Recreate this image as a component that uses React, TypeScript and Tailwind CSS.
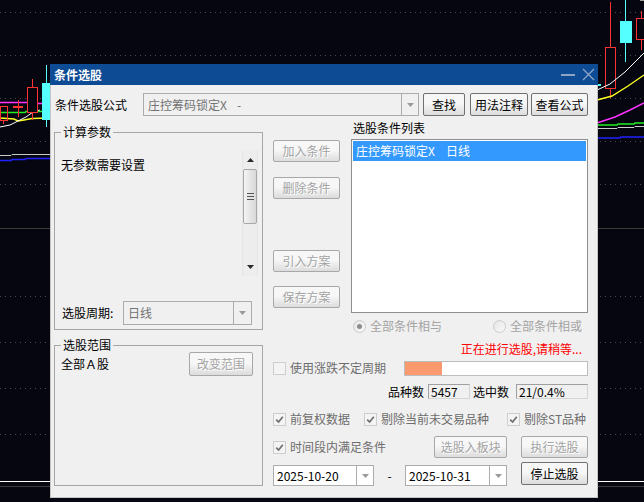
import React from "react";

// small disabled-looking checkbox, classic windows style
const Check = ({ checked }: { checked?: boolean }) => (
  <span className="flex h-[13px] w-[13px] shrink-0 items-center justify-center border border-[#cdcdcd] bg-[#f4f4f4]">
    {checked && (
      <svg width="9" height="9" viewBox="0 0 9 9">
        <path d="M1.2 4.6 L3.6 7 L7.8 1.8" fill="none" stroke="#6f6f6f" strokeWidth="1.7" />
      </svg>
    )}
  </span>
);

const Radio = ({ on }: { on?: boolean }) => (
  <span className="flex h-[13px] w-[13px] shrink-0 items-center justify-center rounded-full border border-[#cbcbcb] bg-linear-to-br from-[#e4e4e4] to-[#fafafa]">
    {on && <span className="h-[5px] w-[5px] rounded-full bg-[#8c8c8c]" />}
  </span>
);

const Btn = ({
  label,
  disabled,
  className = "",
}: {
  label: string;
  disabled?: boolean;
  className?: string;
}) => (
  <div
    className={`flex items-center justify-center rounded-[2px] border bg-linear-to-b from-[#f7f7f7] from-45% to-[#dcdcdc] text-[12px] leading-[16px] ${
      disabled
        ? "border-[#a8a8a8] text-[#a3a3a3] [text-shadow:1px_1px_0_#ffffff]"
        : "border-[#707070] text-black"
    } ${className}`}
  >
    {label}
  </div>
);

const Arrow = () => (
  <svg width="7" height="4" viewBox="0 0 7 4">
    <path d="M0 0H7L3.5 4Z" fill="#9a9a9a" />
  </svg>
);

const Combo = ({
  text,
  disabled,
  className = "",
  pad = "pl-[4px]",
  arrowW = "w-[17px]",
}: {
  text: React.ReactNode;
  disabled?: boolean;
  className?: string;
  pad?: string;
  arrowW?: string;
}) => (
  <div
    className={`flex border border-[#acacac] ${
      disabled ? "bg-[#f0f0f0] text-[#737373]" : "bg-white text-black"
    } ${className}`}
  >
    <div className={`flex flex-1 items-center whitespace-pre ${pad}`}>{text}</div>
    <div className={`flex ${arrowW} items-center justify-center border-l border-[#acacac]`}>
      <Arrow />
    </div>
  </div>
);

const NumBox = ({ value, className = "" }: { value: string; className?: string }) => (
  <div
    className={`flex h-[15px] items-center border border-[#d4d4d4] border-t-[#a0a0a0] border-l-[#a0a0a0] bg-[#f0f0f0] pl-[2px] ${className}`}
  >
    {value}
  </div>
);

// the candle chart behind the dialog
const Chart = () => {
  const dotted = [12, 55, 98, 141, 184, 296, 342, 388, 434];
  return (
    <svg className="absolute inset-0" width="644" height="502" viewBox="0 0 644 502">
      <rect width="644" height="502" fill="#05060f" />
      {dotted.map((y) => (
        <line key={y} x1="0" y1={y + 0.5} x2="644" y2={y + 0.5} stroke="#4c4c4c" strokeDasharray="1 4" />
      ))}
      <line x1="0" y1="228.5" x2="644" y2="228.5" stroke="#3a3a3a" />
      <line x1="0" y1="481.5" x2="644" y2="481.5" stroke="#ffffff" />
      <line x1="0" y1="486.5" x2="644" y2="486.5" stroke="#3c3c3c" />

      {/* left side */}
      <polyline points="0,102.5 33,102.5 34,103.5 50,103.5" fill="none" stroke="#ff33ff" strokeWidth="1.4" />
      <polyline points="0,112.5 25,112.5 26,111.5 50,111.5" fill="none" stroke="#22ee22" strokeWidth="1.4" />
      <polyline points="0,118 14,119 18,121 24,120 32,118.5 50,118" fill="none" stroke="#ffff22" strokeWidth="1.4" />
      <polyline points="0,127 10,125 18,121 26,117 33,112 40,110" fill="none" stroke="#ffffff" strokeWidth="1" />
      <polyline points="0,155.5 11,155.5 12,154.5 50,154.5" fill="none" stroke="#c8c8c8" />
      <polyline points="0,160.5 11,160.5 12,159.5 25,159.5 26,158.5 50,158.5" fill="none" stroke="#2222ff" strokeWidth="1.4" />
      <rect x="0.5" y="106.5" width="7" height="14" fill="none" stroke="#ff3333" />
      <line x1="3.5" y1="120" x2="3.5" y2="124" stroke="#ff3333" />
      <line x1="18.5" y1="100" x2="18.5" y2="117" stroke="#ff3333" />
      <rect x="13" y="106" width="10" height="2" fill="#ff3333" />
      <line x1="32.5" y1="79" x2="32.5" y2="120" stroke="#ff3333" />
      <rect x="27.5" y="87.5" width="10" height="25" fill="#05060f" stroke="#ff3333" />
      <line x1="46.5" y1="65" x2="46.5" y2="127" stroke="#55ffff" />
      <rect x="42" y="83" width="8" height="37" fill="#55ffff" />

      {/* right side */}
      <line x1="610.5" y1="2" x2="610.5" y2="98" stroke="#ff3333" />
      <rect x="605.5" y="47.5" width="10" height="41" fill="#05060f" stroke="#ff3333" />
      <line x1="625.5" y1="0" x2="625.5" y2="62" stroke="#55ffff" />
      <rect x="620" y="21" width="12" height="22" fill="#55ffff" />
      <line x1="641.5" y1="11" x2="641.5" y2="50" stroke="#ff3333" />
      <rect x="636.5" y="18.5" width="10" height="21" fill="#05060f" stroke="#ff3333" />
      <line x1="640" y1="0.5" x2="644" y2="0.5" stroke="#9a9a9a" />
      <polyline points="597,90 610,84 625,72 644,53" fill="none" stroke="#ffffff" strokeWidth="1" />
      <polyline points="597,100 612,96 628,86 644,75" fill="none" stroke="#ffff22" strokeWidth="1.4" />
      <polyline points="597,123 615,117 630,110 644,103" fill="none" stroke="#ff33ff" strokeWidth="1.4" />
      <polyline points="597,125 617,125 618,124 634,124 635,123 644,123" fill="none" stroke="#22ee22" strokeWidth="1.4" />
      <polyline points="597,128.5 617,128.5 618,127.5 634,127.5 635,126.5 644,126.5" fill="none" stroke="#cfcfcf" />
      <polyline points="597,138 620,138 621,137 644,137" fill="none" stroke="#2222ff" strokeWidth="1.4" />
      <rect x="597" y="84" width="4" height="2" fill="#55ffff" />
    </svg>
  );
};

const ScrollBar = () => (
  <div className="mr-[4px] flex w-[16px] flex-col items-center border-x border-[#e6e6e6] bg-[#ededed]">
    <div className="flex h-[19px] items-center justify-center">
      <svg width="7" height="4" viewBox="0 0 7 4">
        <path d="M0 4H7L3.5 0Z" fill="#2a2a2a" />
      </svg>
    </div>
    <div className="flex h-[55px] w-[14px] flex-col items-center justify-center gap-[2px] rounded-[2px] border border-[#a8a8a8] bg-linear-to-r from-[#f4f4f4] to-[#d8d8d8]">
      <span className="h-px w-[7px] bg-[#555]" />
      <span className="h-px w-[7px] bg-[#555]" />
      <span className="h-px w-[7px] bg-[#555]" />
    </div>
    <div className="flex-1" />
    <div className="flex h-[19px] items-center justify-center">
      <svg width="7" height="4" viewBox="0 0 7 4">
        <path d="M0 0H7L3.5 4Z" fill="#2a2a2a" />
      </svg>
    </div>
  </div>
);

export default function App() {
  return (
    <div className="relative h-[502px] w-[644px] overflow-hidden bg-[#05060f] font-['Noto_Sans_CJK_SC',sans-serif] text-[12px] leading-[16px] text-black">
      <Chart />

      <div className="absolute left-[50px] top-[64px] flex h-[434px] w-[548px] flex-col">
        {/* title bar */}
        <div className="flex h-[21px] items-center bg-[#0d4b95] pl-[4px] pr-[3px]">
          <span className="text-[12px] font-bold text-white">条件选股</span>
          <span className="ml-auto h-[2px] w-[14px] bg-[#8da6c8]" />
          <svg className="ml-[7px]" width="13" height="13" viewBox="0 0 13 13">
            <path d="M1 1L12 12M12 1L1 12" stroke="#8da6c8" strokeWidth="1.3" />
          </svg>
        </div>

        {/* body */}
        <div className="flex flex-1 flex-col border-x border-b border-[#c4c4c4] bg-[#f0f0f0] pl-[3px] pr-[9px] pt-[8px]">
          <div className="flex h-[23px] items-stretch">
            <div className="flex w-[89px] items-center pl-px">条件选股公式</div>
            <Combo
              text={
                <>
                  庄控筹码锁定X<span className="ml-[10px]">-</span>
                </>
              }
              disabled
              className="w-[276px]"
            />
            <Btn label="查找" className="ml-[4px] w-[42px]" />
            <Btn label="用法注释" className="ml-[5px] w-[58px]" />
            <Btn label="查看公式" className="ml-[3px] w-[57px]" />
          </div>

          <div className="flex">
            {/* left column */}
            <div className="flex w-[209px] flex-col">
              <fieldset className="mt-[8px] flex h-[206px] flex-col border border-[#a6a6a6]">
                <legend className="ml-[6px] px-[2px] leading-[16px]">计算参数</legend>
                <div className="mt-[10px] flex h-[126px]">
                  <div className="flex-1 pl-[6px] pt-[7px]">无参数需要设置</div>
                  <ScrollBar />
                </div>
                <div className="mt-[25px] flex h-[24px] items-stretch">
                  <div className="flex w-[68px] items-center pl-[7px]">选股周期:</div>
                  <Combo text="日线" disabled className="w-[129px]" arrowW="w-[18px]" />
                </div>
              </fieldset>

              <fieldset className="mt-[7px] flex h-[149px] flex-col border border-[#a6a6a6]">
                <legend className="ml-[6px] px-[2px] leading-[16px]">选股范围</legend>
                <div className="-mt-px flex h-[24px] items-center">
                  <span className="pl-[6px]">全部Ａ股</span>
                  <Btn label="改变范围" disabled className="ml-auto mr-[9px] h-[24px] w-[64px]" />
                </div>
              </fieldset>
            </div>

            {/* right area */}
            <div className="ml-[10px] flex w-[315px] flex-col">
              <div className="flex">
                <div className="flex w-[67px] flex-col pt-[24px]">
                  <Btn label="加入条件" disabled className="h-[22px]" />
                  <Btn label="删除条件" disabled className="mt-[15px] h-[22px]" />
                  <Btn label="引入方案" disabled className="mt-[51px] h-[22px]" />
                  <Btn label="保存方案" disabled className="mt-[14px] h-[22px]" />
                </div>
                <div className="ml-[11px] flex w-[237px] flex-col">
                  <div className="flex h-[23px] items-center pl-[2px]">选股条件列表</div>
                  <div className="h-[174px] border border-[#8e8e8e] bg-white p-px">
                    <div className="flex h-[20px] items-center bg-[#3399ff] pl-[3px] text-white">
                      庄控筹码锁定X<span className="ml-[11px]">日线</span>
                    </div>
                  </div>
                  <div className="flex h-[26px] items-center pl-[2px] text-[#a3a3a3]">
                    <div className="flex w-[140px] items-center gap-[4px]">
                      <Radio on />
                      <span>全部条件相与</span>
                    </div>
                    <div className="flex items-center gap-[4px]">
                      <Radio />
                      <span>全部条件相或</span>
                    </div>
                  </div>
                </div>
              </div>

              <div className="flex h-[20px] items-center justify-end pr-[6px] text-[#ff0000]">
                正在进行选股,请稍等...
              </div>

              <div className="mt-px flex h-[16px] items-center">
                <div className="flex w-[131px] items-center gap-[4px] text-[#6d6d6d]">
                  <Check />
                  <span>使用涨跌不定周期</span>
                </div>
                <div className="flex h-[15px] flex-1 border border-[#bdbdbd] bg-white">
                  <div className="w-[37px] bg-[#f99a6e]" />
                </div>
              </div>

              <div className="mt-[8px] flex h-[15px] items-center justify-end">
                <span>品种数</span>
                <NumBox value="5457" className="ml-[4px] w-[42px]" />
                <span className="ml-[3px]">选中数</span>
                <NumBox value="21/0.4%" className="ml-[7px] w-[72px]" />
              </div>

              <div className="mt-[13px] flex h-[14px] items-center text-[#6d6d6d]">
                <div className="flex w-[91px] items-center gap-[4px]">
                  <Check checked />
                  <span>前复权数据</span>
                </div>
                <div className="flex w-[143px] items-center gap-[4px]">
                  <Check checked />
                  <span>剔除当前未交易品种</span>
                </div>
                <div className="flex items-center gap-[4px]">
                  <Check checked />
                  <span>剔除ST品种</span>
                </div>
              </div>

              <div className="mt-[10px] flex h-[22px] items-center">
                <div className="flex w-[162px] items-center gap-[4px] text-[#6d6d6d]">
                  <Check checked />
                  <span>时间段内满足条件</span>
                </div>
                <Btn label="选股入板块" disabled className="h-[22px] w-[73px]" />
                <Btn label="执行选股" disabled className="ml-[14px] h-[22px] w-[67px]" />
              </div>

              <div className="mt-[4px] flex h-[24px] items-end">
                <Combo text="2025-10-20" className="h-[21px] w-[101px]" pad="pl-[3px]" />
                <div className="flex h-[21px] w-[31px] items-center justify-center">-</div>
                <Combo text="2025-10-31" className="h-[21px] w-[102px]" pad="pl-[3px]" />
                <Btn label="停止选股" className="mb-px ml-[14px] h-[23px] w-[67px] self-start" />
              </div>
            </div>
          </div>
        </div>
      </div>
    </div>
  );
}
